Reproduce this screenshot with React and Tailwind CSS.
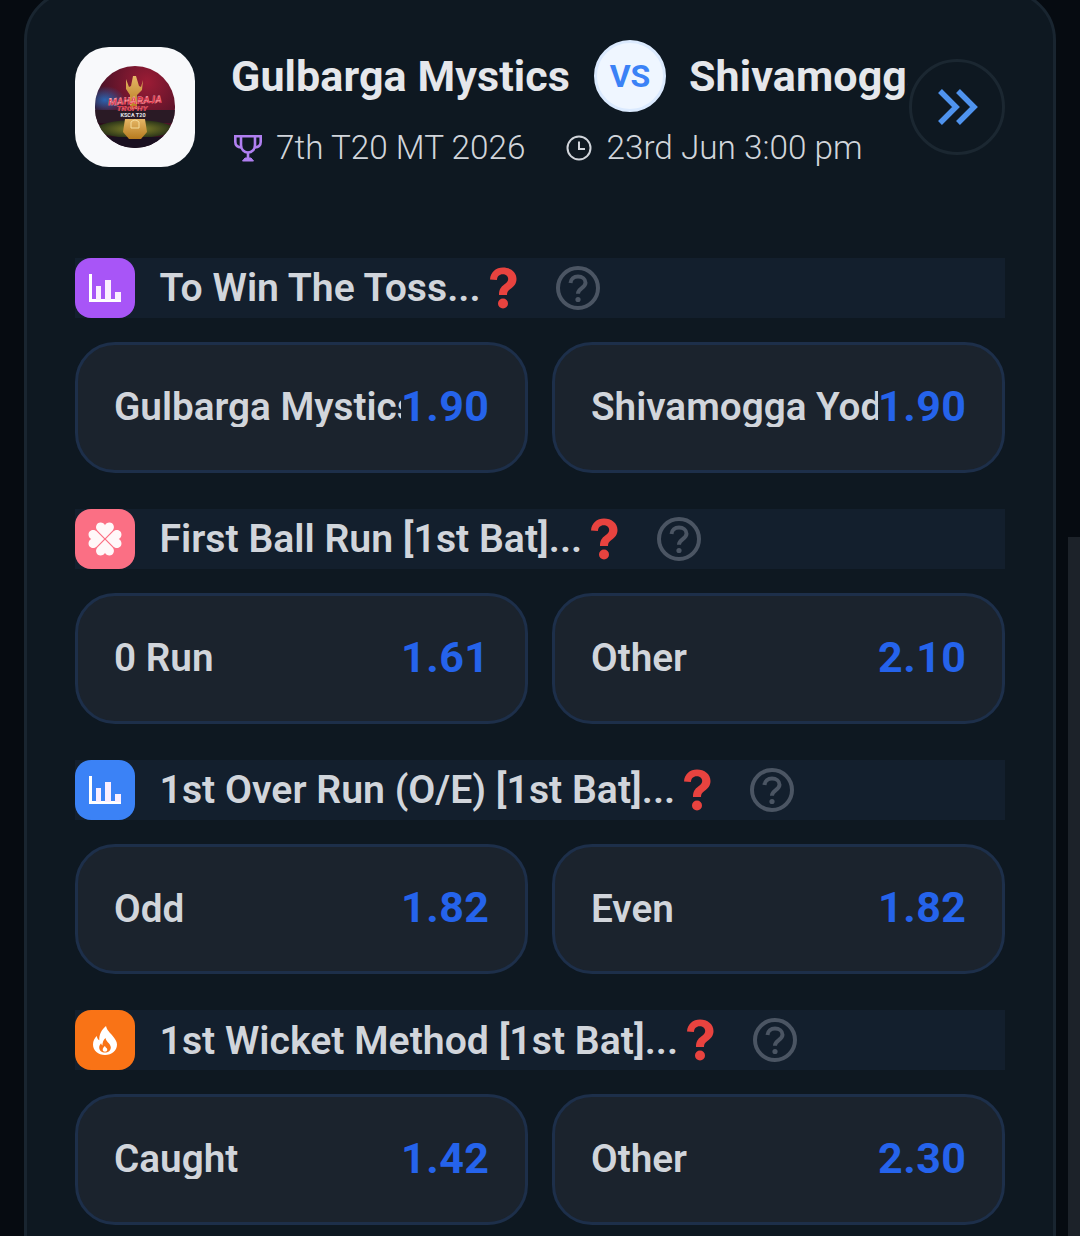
import React from "react";

const BarsIcon = () => (
  <svg width="32" height="28" viewBox="0 0 32 28" fill="#fff">
    <rect x="0" y="0" width="3" height="28" />
    <rect x="0" y="25" width="32" height="3" />
    <rect x="7" y="12" width="5" height="14" fill="#fbeeff" />
    <rect x="16" y="6" width="6" height="20" fill="#fbeeff" />
    <rect x="26" y="18" width="6" height="8" fill="#fbeeff" />
  </svg>
);

const CloverIcon = () => (
  <svg width="34" height="34" viewBox="0 0 32 32" fill="#fff8f9">
    <path d="M16 15.200L8.800 8C6.300 5.300 7.800.5 11.800.5c2 0 3.500 1 4.200 2.600C16.700 1.500 18.200.5 20.200.5c4 0 5.500 4.800 3 7.500z" />
    <path transform="rotate(90 16 16)" d="M16 15.200L8.800 8C6.300 5.300 7.800.5 11.800.5c2 0 3.500 1 4.200 2.600C16.700 1.500 18.200.5 20.200.5c4 0 5.500 4.800 3 7.500z" />
    <path transform="rotate(180 16 16)" d="M16 15.200L8.800 8C6.300 5.300 7.800.5 11.800.5c2 0 3.500 1 4.200 2.600C16.700 1.500 18.200.5 20.200.5c4 0 5.500 4.800 3 7.500z" />
    <path transform="rotate(270 16 16)" d="M16 15.200L8.800 8C6.300 5.300 7.800.5 11.800.5c2 0 3.500 1 4.200 2.600C16.700 1.500 18.200.5 20.200.5c4 0 5.500 4.800 3 7.500z" />
  </svg>
);

const FlameIcon = () => (
  <svg width="24" height="29" viewBox="0 0 24 29">
    <path fill="#fff" d="M13 0c1 4.500 4 6.500 6.500 9.700C22 12.800 24 15.500 24 18.500 24 24.500 18.800 29 12 29S0 24.500 0 18.500c0-3.500 1.500-6.300 3.800-8.500.2 2 1 3.300 2.500 4.200C6.200 8.500 8.500 3.500 13 0z" />
    <path fill="#f97316" d="M12.500 12c.5 2.500 2 3.700 3.300 5.300 1.200 1.500 2 2.800 2 4.300 0 3-2.600 5-5.800 5s-5.800-2-5.800-5c0-1.800.8-3.200 1.900-4.300.2 1 .6 1.600 1.300 2.100 0-3 1-5.700 3.100-7.400z" />
    <path fill="#fff" d="M12 20c.3 1 1 1.500 1.500 2.100.5.600.8 1.100.8 1.700 0 1.200-1 2-2.300 2s-2.300-.8-2.300-2c0-1.500.9-2.800 2.300-3.800z" />
  </svg>
);

const QuestionEmoji = () => (
  <svg width="28" height="42" viewBox="0 0 28 42" className="shrink-0">
    <path
      d="M1 12.500C1.500 5 7 .5 14 .5c7.500 0 13.500 4.500 13.500 11.500 0 5-2.900 7.600-5.800 9.700-2.800 2-3.700 3.200-3.700 6.300h-8c0-5.500 2-8.200 5.200-10.500 2.400-1.700 4-3 4-5.400 0-3-2.500-4.800-5.500-4.800-3.400 0-5.500 2.200-5.800 5.600z"
      fill="#e8433f"
    />
    <circle cx="14" cy="36.500" r="5" fill="#e8433f" />
  </svg>
);

const HelpIcon = () => (
  <svg width="44" height="44" viewBox="0 0 44 44" fill="none" stroke="#4b5563" className="shrink-0">
    <circle cx="22" cy="22" r="20" strokeWidth="4" />
    <path d="M14.500 17c.3-4 3.400-6.500 7.500-6.500s7.500 2.500 7.500 6.200c0 5.400-7.500 5.500-7.500 11" strokeWidth="4" />
    <circle cx="22" cy="33.500" r="2.600" fill="#4b5563" stroke="none" />
  </svg>
);

const TrophyIcon = () => (
  <svg width="28" height="28" viewBox="0 0 28 28" fill="none" stroke="#b07ff0" strokeWidth="2.600" className="shrink-0">
    <path d="M7 2.300h14v8.700c0 4.400-3 7.500-7 7.500s-7-3.100-7-7.500z" />
    <path d="M7 2.300H1.300v5.700c0 3 2.300 5.200 6.300 5.400M21 2.300h5.700v5.700c0 3-2.300 5.200-6.300 5.400M14 18.500v6" />
    <path d="M8.500 27h11l-2.500-3h-6z" fill="#b07ff0" strokeWidth="1" />
  </svg>
);

const ClockIcon = () => (
  <svg width="26" height="26" viewBox="0 0 26 26" fill="none" stroke="#d1d5db" strokeWidth="2">
    <circle cx="13" cy="13" r="11.500" />
    <path d="M13 6.500V14h6" />
  </svg>
);

const DoubleChevron = () => (
  <svg width="42" height="36" viewBox="0 0 42 36" fill="none" stroke="#4f93ee" strokeWidth="5.500" className="ml-[2px]">
    <path d="M3 2l16 16L3 34" />
    <path d="M21 2l16 16-16 16" />
  </svg>
);

const LogoArt = () => (
  <svg width="80" height="82" viewBox="0 0 80 82" className="rounded-full">
    <defs>
      <radialGradient id="sky" cx="0.65" cy="0.2" r="0.75">
        <stop offset="0" stopColor="#9c1c35" />
        <stop offset="0.7" stopColor="#571329" />
        <stop offset="1" stopColor="#2b0d1c" />
      </radialGradient>
      <radialGradient id="blue" cx="0.5" cy="0.5" r="0.5">
        <stop offset="0" stopColor="#2a63b0" />
        <stop offset="1" stopColor="#2a63b0" stopOpacity="0" />
      </radialGradient>
      <radialGradient id="pitch" cx="0.5" cy="0.5" r="0.5">
        <stop offset="0" stopColor="#8b8a2c" />
        <stop offset="1" stopColor="#2a3318" />
      </radialGradient>
      <linearGradient id="gold" x1="0" y1="0" x2="0" y2="1">
        <stop offset="0" stopColor="#e6b766" />
        <stop offset="1" stopColor="#b67a1e" />
      </linearGradient>
    </defs>
    <rect width="80" height="82" fill="url(#sky)" />
    <ellipse cx="10" cy="34" rx="20" ry="14" fill="url(#blue)" />
    <rect x="0" y="44" width="80" height="13" fill="#2a1a25" />
    <ellipse cx="40" cy="63" rx="38" ry="9" fill="url(#pitch)" />
    <rect x="0" y="71" width="80" height="11" fill="#1a1020" />
    <path d="M31 13l3 8 2-1 2-10 3 0 3 10 2 1 2-7-1 10-5 5v14h-7V29l-4-6z" fill="url(#gold)" />
    <path d="M30 53h20l2 13-6 7H34l-6-7z" fill="url(#gold)" />
    <path d="M36 62v-6q4-4 8 0v6z" fill="none" stroke="#f5dc9b" strokeWidth="1" />
    <text x="40" y="38" textAnchor="middle" fontFamily="Roboto" fontWeight="900" fontSize="10" fontStyle="italic" fill="#e8263a" stroke="#fff" strokeWidth="0.200" transform="rotate(-3 40 38)">MAHARAJA</text>
    <text x="37" y="45" textAnchor="middle" fontFamily="Roboto" fontWeight="900" fontSize="8" fontStyle="italic" fill="#d92336" stroke="#fff" strokeWidth="0.150">TROPHY</text>
    <text x="38" y="51" textAnchor="middle" fontFamily="Roboto" fontWeight="700" fontSize="5.500" fill="#e5e7eb">KSCA T20</text>
  </svg>
);

const sections = [
  { icon: <BarsIcon />, bg: "bg-[#a855f7]", title: "To Win The Toss...", a: ["Gulbarga Mystics", "1.90"], b: ["Shivamogga Yodhas", "1.90"] },
  { icon: <CloverIcon />, bg: "bg-[#fb6f84]", title: "First Ball Run [1st Bat]...", a: ["0 Run", "1.61"], b: ["Other", "2.10"] },
  { icon: <BarsIcon />, bg: "bg-[#3b82f6]", title: "1st Over Run (O/E) [1st Bat]...", a: ["Odd", "1.82"], b: ["Even", "1.82"] },
  { icon: <FlameIcon />, bg: "bg-[#f97316]", title: "1st Wicket Method [1st Bat]...", a: ["Caught", "1.42"], b: ["Other", "2.30"] },
];

const Odd = ({ label, value }) => (
  <div className="flex h-[130.800px] min-w-0 items-center rounded-[40px] border-[3px] border-[#1d2f4a] bg-[#1b232d] pl-[36px] pr-[37px]">
    <span className="min-w-0 flex-1 overflow-hidden whitespace-nowrap text-[38.700px] font-semibold leading-none text-[#d1d5db]">{label}</span>
    <span className="mb-[2px] w-[87px] shrink-0 whitespace-nowrap text-[43px] font-bold leading-none tracking-[0.5px] text-[#2563eb]">{value}</span>
  </div>
);

const Section = ({ s }) => (
  <section className="flex flex-col gap-[24px]">
    <div className="flex h-[60px] items-center bg-[#131f2d]">
      <div className={`flex h-[60px] w-[60px] shrink-0 items-center justify-center rounded-[16px] ${s.bg}`}>{s.icon}</div>
      <h3 className="ml-[24.500px] whitespace-nowrap pt-[2px] text-[39.200px] font-semibold leading-none text-[#d1d5db]">{s.title}</h3>
      <span className="ml-[8px]"><QuestionEmoji /></span>
      <span className="ml-[39px]"><HelpIcon /></span>
    </div>
    <div className="grid grid-cols-2 gap-[24px]">
      <Odd label={s.a[0]} value={s.a[1]} />
      <Odd label={s.b[0]} value={s.b[1]} />
    </div>
  </section>
);

export default function App() {
  return (
    <div className="relative h-[1236px] w-[1080px] overflow-hidden bg-[#060b11] font-['Roboto',sans-serif]">
      <div className="absolute right-0 top-[537px] h-[699px] w-[12px] bg-[#1c2229]" />
      <main className="ml-[24px] mt-[-10px] h-[1400px] w-[1032px] rounded-[50px] border-[3px] border-[#192530] bg-[#0e1821] px-[48px] pt-[47px]">
        <header className="flex items-center">
          <div className="flex h-[120px] w-[120px] shrink-0 items-center justify-center rounded-[34px] bg-[#f8f9fb]">
            <LogoArt />
          </div>
          <div className="ml-[36px] mr-[1px] flex h-[134px] min-w-0 flex-1 flex-col overflow-hidden">
            <div className="flex h-[72px] shrink-0 items-center whitespace-nowrap text-[43px] font-bold leading-none tracking-[0.1px] text-[#e5e7eb]">
              <span>Gulbarga Mystics</span>
              <span className="ml-[24px] mr-[23px] flex h-[72px] w-[72px] shrink-0 items-center justify-center rounded-full border-[3px] border-[#dbeafe] bg-[#eff6ff] text-[32px] font-bold tracking-normal text-[#3b82f6]">VS</span>
              <span>Shivamogga Yodhas</span>
            </div>
            <div className="mt-[14px] flex h-[44px] shrink-0 items-center whitespace-nowrap text-[33.300px] font-light leading-none text-[#d1d5db]">
              <span className="ml-[3px]"><TrophyIcon /></span>
              <span className="ml-[14px]">7th T20 MT 2026</span>
              <span className="ml-[41px]"><ClockIcon /></span>
              <span className="ml-[14px]">23rd Jun 3:00 pm</span>
            </div>
          </div>
          <div className="flex h-[96px] w-[96px] shrink-0 items-center justify-center rounded-full border-[3px] border-[#1b2731]">
            <DoubleChevron />
          </div>
        </header>
        <div className="mt-[84px] flex flex-col gap-[36px]">
          {sections.map((s) => (
            <Section key={s.title} s={s} />
          ))}
        </div>
      </main>
    </div>
  );
}
